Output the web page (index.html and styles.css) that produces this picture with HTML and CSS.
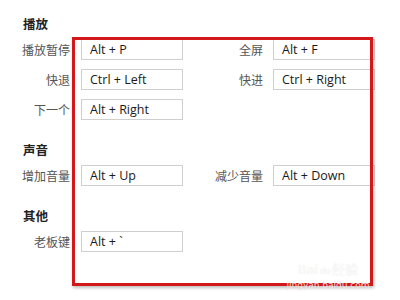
FILE: index.html
```html
<!DOCTYPE html>
<html lang="zh-CN">
<head>
    <meta charset="UTF-8">
    <title>热键设置</title>
    <link rel="stylesheet" href="styles.css">
</head>
<body>
    <div class="panel">
        <div class="section">
            <div class="title">播放</div>
            <div class="grid">
                <label>播放暂停</label><div class="key">Alt + P</div>
                <label>全屏</label><div class="key">Alt + F</div>
                <label>快退</label><div class="key">Ctrl + Left</div>
                <label>快进</label><div class="key">Ctrl + Right</div>
                <label>下一个</label><div class="key">Alt + Right</div>
            </div>
        </div>
        <div class="section">
            <div class="title">声音</div>
            <div class="grid">
                <label>增加音量</label><div class="key">Alt + Up</div>
                <label>减少音量</label><div class="key">Alt + Down</div>
            </div>
        </div>
        <div class="section">
            <div class="title">其他</div>
            <div class="grid">
                <label>老板键</label><div class="key">Alt + `</div>
            </div>
        </div>

        <div class="highlight"></div>
        <div class="watermark">
            <span class="wm-logo">Bai<span class="paw">du</span>经验</span>
            <span class="wm-url">jingyan.baidu.com</span>
        </div>
    </div>
</body>
</html>
```

FILE: styles.css
```css
body {
    margin: 0;
    background-color: #ffffff;
    font-family: "Noto Sans CJK SC", "Open Sans", sans-serif;
    font-size: 12px;
    color: #555555;
}
.panel {
    position: relative;
    width: 400px;
    height: 300px;
    overflow: hidden;
    padding-top: 14px;
    box-sizing: border-box;
}
.section {
    margin-bottom: 20px;
}
.title {
    height: 20px;
    line-height: 20px;
    padding-left: 23px;
    font-weight: bold;
    font-size: 12.5px;
    color: #222222;
    margin-bottom: 5px;
}
.grid {
    display: grid;
    grid-template-columns: 81px 102px 90px 102px;
    row-gap: 9px;
}
.grid label {
    text-align: right;
    padding-right: 11px;
    line-height: 21px;
    white-space: nowrap;
}
.grid label:nth-of-type(even) {
    padding-right: 10px;
}
.key {
    height: 21px;
    line-height: 20px;
    box-sizing: border-box;
    border: 1px solid #cfcfcf;
    padding-left: 8px;
    font-family: "Open Sans", "Noto Sans", sans-serif;
    font-size: 12.5px;
    color: #1a1a1a;
    background-color: #ffffff;
}
.highlight {
    position: absolute;
    left: 72px;
    top: 37px;
    width: 301px;
    height: 249px;
    box-sizing: border-box;
    border: 3px solid #d3181c;
    box-shadow: 1px 2px 3px rgba(0, 0, 0, 0.25);
}
.watermark {
    position: absolute;
    left: 282px;
    top: 259px;
    width: 92px;
    text-align: center;
    color: #fbfbfb;
    font-family: "DejaVu Sans", sans-serif;
}
.wm-logo {
    display: block;
    font-size: 13px;
    text-shadow: 0 0 1px #e0e0e0;
}
.paw {
    font-size: 8px;
    margin: 0 2px;
}
.wm-url {
    display: block;
    margin-top: 2px;
    font-size: 9px;
    color: #f4dede;
}
```
